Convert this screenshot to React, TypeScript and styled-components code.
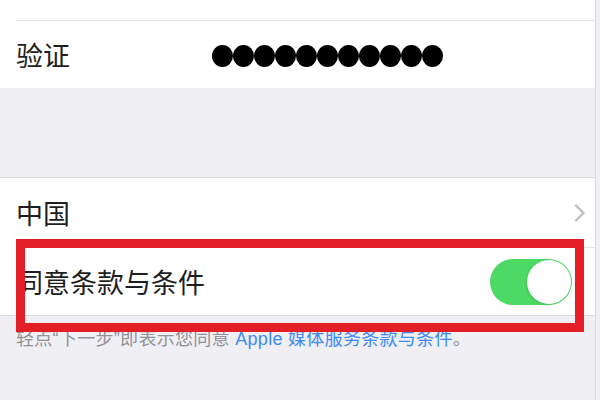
import { FC } from "react";
import styled, { createGlobalStyle } from "styled-components";

const GlobalStyle = createGlobalStyle`
  html, body {
    margin: 0;
    padding: 0;
    background: #efeff4;
  }

  body {
    font-family: "Noto Sans CJK SC", "Liberation Sans", sans-serif;
    -webkit-font-smoothing: antialiased;
  }
`;

const Screen = styled.div`
  position: relative;
  width: 596px;
  height: 400px;
  box-sizing: border-box;
  border-right: 1px solid #dadade;
  background: #efeff4;
  overflow: hidden;
`;

const Group = styled.section<{ $bordered?: boolean }>`
  background: #fff;
  border-top: ${(props) => (props.$bordered ? "1px solid #d8d8dc" : "none")};
  border-bottom: ${(props) => (props.$bordered ? "1px solid #dcdce0" : "none")};
`;

const Row = styled.div<{ $height: number; $divider?: boolean }>`
  display: flex;
  align-items: center;
  justify-content: space-between;
  height: ${(props) => props.$height}px;
  margin-left: 16px;
  padding-right: 9px;
  border-top: ${(props) => (props.$divider ? "1px solid #e4e4e8" : "none")};
`;

const Label = styled.span`
  font-size: 27px;
  line-height: 1;
  color: #1e1e1e;
`;

const SecureField = styled.div`
  display: flex;
  margin-right: auto;
  padding-left: 142px;
  padding-top: 2px;
`;

const Dot = styled.span`
  width: 21px;
  height: 22px;
  border-radius: 50%;
  background: #000;
`;

const Spacer = styled.div`
  height: 89px;
`;

const Toggle = styled.div<{ $on: boolean }>`
  display: flex;
  justify-content: ${(props) => (props.$on ? "flex-end" : "flex-start")};
  align-items: center;
  width: 82px;
  height: 46px;
  box-sizing: border-box;
  padding: 1px;
  margin-right: 14px;
  border-radius: 23px;
  background: ${(props) => (props.$on ? "#4cd964" : "#e5e5ea")};
`;

const Knob = styled.span`
  width: 44px;
  height: 44px;
  border-radius: 50%;
  background: #fff;
  box-shadow: -1px 1px 2px rgba(0, 0, 0, 0.12);
`;

const Footer = styled.p`
  margin: 0;
  padding: 11px 16px 0;
  font-family: "Liberation Sans", "Noto Sans CJK SC", sans-serif;
  font-size: 18px;
  line-height: 24px;
  letter-spacing: 0.3px;
  color: #929297;
  white-space: nowrap;

  a {
    color: #3d8bf2;
    text-decoration: none;
  }
`;

const Highlight = styled.div`
  position: absolute;
  left: 16px;
  top: 239px;
  width: 568px;
  height: 93px;
  box-sizing: border-box;
  border: 9px solid #e41e26;
  pointer-events: none;
`;

const Chevron: FC = () => (
  <svg width="12" height="18" viewBox="0 0 12 18">
    <path
      d="M2 1.5 L9.5 9 L2 16.5"
      fill="none"
      stroke="#bdbdc2"
      strokeWidth="2.4"
      strokeLinecap="round"
      strokeLinejoin="round"
    />
  </svg>
);

const App: FC = () => {
  const passwordLength = 11;

  return (
    <>
      <GlobalStyle />
      <Screen>
        <Group>
          <Row $height={20} />
          <Row $height={67} $divider>
            <Label>验证</Label>
            <SecureField>
              {Array.from({ length: passwordLength }).map((_, i) => (
                <Dot key={i} />
              ))}
            </SecureField>
          </Row>
        </Group>

        <Spacer />

        <Group $bordered>
          <Row $height={69}>
            <Label>中国</Label>
            <Chevron />
          </Row>
          <Row $height={67} $divider>
            <Label>同意条款与条件</Label>
            <Toggle $on>
              <Knob />
            </Toggle>
          </Row>
        </Group>

        <Footer>
          轻点“下一步”即表示您同意 <a href="#">Apple 媒体服务条款与条件</a>。
        </Footer>

        <Highlight />
      </Screen>
    </>
  );
};

export default App;
